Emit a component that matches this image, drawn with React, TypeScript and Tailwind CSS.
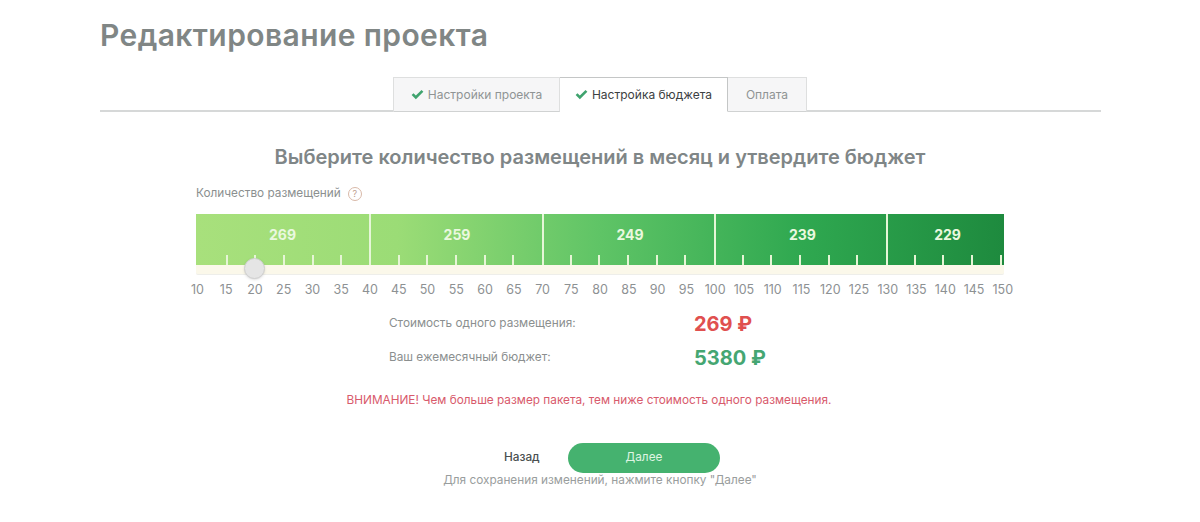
import React from "react";

const scale = Array.from({ length: 29 }, (_, i) => 10 + i * 5);
const segments = [
  { label: "269", w: "w-[175px]", pad: "" },
  { label: "259", w: "w-[173px]", pad: "pl-[1px]" },
  { label: "249", w: "w-[172px]", pad: "pl-[2px]" },
  { label: "239", w: "w-[172px]", pad: "pl-[3px]" },
  { label: "229", w: "flex-1", pad: "pl-[3px]" },
];

function Check() {
  return (
    <svg viewBox="0 0 14 12" className="w-[13px] h-[11px] shrink-0">
      <path d="M0.6 6.6 L2.6 4.6 L5.2 7.2 L11.4 1 L13.4 3 L5.2 11.2 Z" fill="#3fa36e" />
    </svg>
  );
}

function Tab({ children, active, w }: { children: React.ReactNode; active?: boolean; w: string }) {
  return (
    <div
      className={
        "h-[35px] flex items-center justify-center gap-[4px] text-[12px] border-t border-r -mb-px " +
        w + " " +
        (active
          ? "bg-white border-[#c4c6c6] text-[#3c4142] border-b border-b-white"
          : "bg-[#f6f6f7] border-[#dedfdf] text-[#8f9494] border-b border-b-[#d0d2d2]")
      }
    >
      {children}
    </div>
  );
}

export default function App() {
  return (
    <div className="w-[1200px] h-[522px] bg-white overflow-hidden font-['Inter','Noto_Sans',sans-serif]">
      <div className="w-[1001px] ml-[100px]">
        <h1 className="pt-[16px] h-[77px] text-[30px] leading-[38px] font-semibold text-[#808685] tracking-[0.4px]">
          Редактирование проекта
        </h1>
        <div className="flex pl-[293px] border-b-2 border-[#d6d8d8] h-[35px]">
          <div className="flex border-l border-[#dedfdf] h-[35px]">
            <Tab w="w-[166px]">
              <Check />
              Настройки проекта
            </Tab>
            <Tab w="w-[168px]" active>
              <Check />
              Настройка бюджета
            </Tab>
            <Tab w="w-[79px]">Оплата</Tab>
          </div>
        </div>
        <h2 className="mt-[32px] text-center text-[20px] leading-[26px] font-semibold text-[#7f8687] w-[1000px]">
          Выберите количество размещений в месяц и утвердите бюджет
        </h2>
      </div>

      <div className="w-[808px] ml-[196px] mt-[14px]">
        <div className="flex items-center gap-[7px] h-[20px] text-[11.8px] text-[#8b8f8f]">
          Количество размещений
          <span className="w-[14px] h-[14px] rounded-full border border-[#d9b9a8] text-[#c0a090] text-[9px] flex items-center justify-center">
            ?
          </span>
        </div>
        <div className="relative mt-[10px] h-[61px] bg-[#fbf8ea] rounded-b-[2px] border-b border-[#eeeeea]">
          <div className="relative h-[51px] flex bg-[linear-gradient(90deg,#a8e07c_0%,#9bdc76_25%,#5fc466_50%,#2fa850_75%,#1e8a3e_100%)]">
            {segments.map((s, i) => (
              <div
                key={s.label}
                className={
                  s.w + " " + s.pad +
                  " h-full pt-[12px] text-center text-[14px] leading-[18px] font-bold text-[#eaf8df] " +
                  (i < 4 ? "border-r-2 border-[#e6f6d8]" : "")
                }
              >
                {s.label}
              </div>
            ))}
            <div className="absolute left-[1px] right-[2px] bottom-0 h-[10px] flex justify-between">
              {scale.map((v) => (
                <span
                  key={v}
                  className={"w-[2px] h-full " + ((v - 10) % 30 === 0 ? "bg-transparent" : "bg-[#e6f5d6]")}
                />
              ))}
            </div>
          </div>
          <div className="absolute left-[48px] top-[44px] w-[21px] h-[21px] rounded-full bg-[#e5e5e5] border border-[#cfcfcf] shadow-sm" />
        </div>
        <div className="flex w-[834px] -ml-[13px] mt-[7px] text-[12.5px] leading-[16px] text-[#8d9193]">
          {scale.map((v) => (
            <span key={v} className="flex-1 text-center">
              {v}
            </span>
          ))}
        </div>
      </div>

      <div className="ml-[389px] mt-[9px] flex items-center h-[34px]">
        <span className="w-[305px] text-[11.8px] text-[#8b8f8f]">Стоимость одного размещения:</span>
        <span className="text-[20px] font-bold text-[#e0504f]">269 ₽</span>
      </div>
      <div className="ml-[389px] flex items-center h-[34px]">
        <span className="w-[305px] text-[11.8px] text-[#8b8f8f]">Ваш ежемесячный бюджет:</span>
        <span className="text-[20px] font-bold text-[#45a672]">5380 ₽</span>
      </div>
      <p className="w-[1178px] mt-[17px] text-center text-[11.8px] leading-[16px] text-[#d85a6c]">
        ВНИМАНИЕ! Чем больше размер пакета, тем ниже стоимость одного размещения.
      </p>

      <div className="mt-[35px] ml-[504px] flex items-center h-[30px]">
        <span className="w-[64px] text-[11.8px] font-medium text-[#4a4f50]">Назад</span>
        <button className="w-[152px] h-[30px] rounded-full bg-[#45b26f] text-[11.8px] text-[#dff5e2]">Далее</button>
      </div>
      <p className="text-center text-[11.8px] leading-[14px] text-[#999d9d]">
        Для сохранения изменений, нажмите кнопку "Далее"
      </p>
    </div>
  );
}
